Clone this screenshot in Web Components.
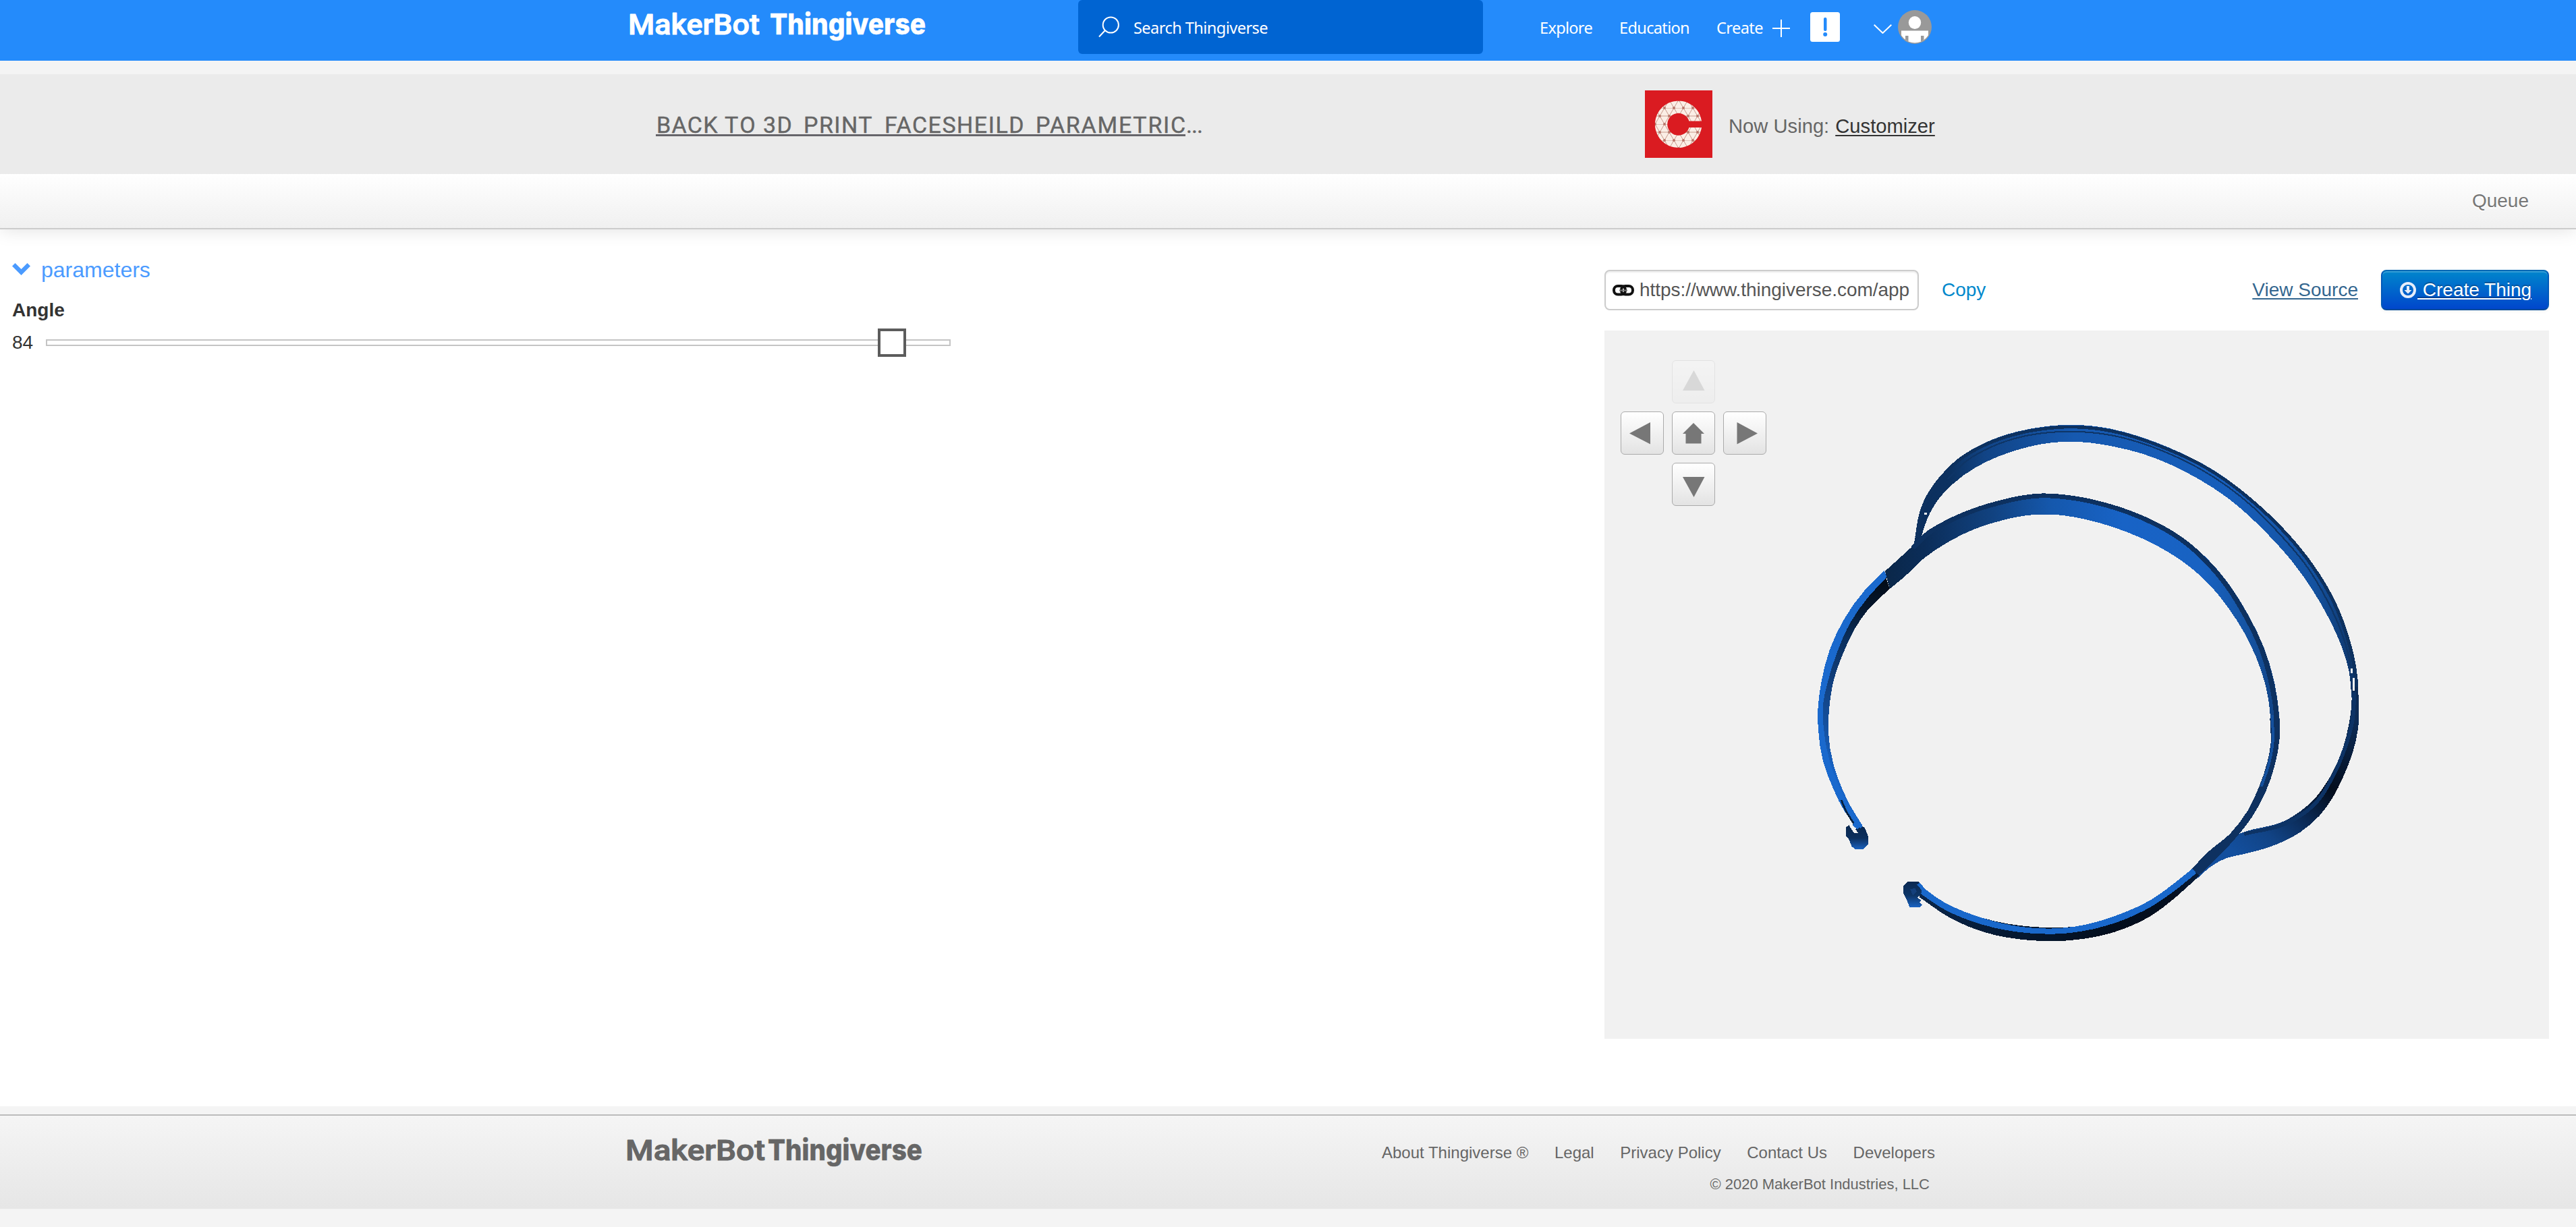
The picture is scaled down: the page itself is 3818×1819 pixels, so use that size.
<!DOCTYPE html>
<html lang="en">
<head>
<meta charset="utf-8">
<title>Customizer - Thingiverse</title>
<style>
  body { margin: 0; background: #f4f4f4; font-family: "Liberation Sans", Arial, sans-serif; color: #333; }
</style>
</head>
<body>
<customizer-page></customizer-page>
<script>
const define = (name, html, setup) => customElements.define(name, class extends HTMLElement {
  connectedCallback() {
    if (this.shadowRoot) return;
    const t = document.createElement('template');
    t.innerHTML = html;
    this.attachShadow({ mode: 'open' }).append(t.content.cloneNode(true));
    if (setup) setup(this, this.shadowRoot);
  }
});

/* Text whose tracking is adjusted so it occupies a given width */
define('fit-text', `<style>:host{display:block;white-space:pre}span{display:inline-block}</style><span></span>`, (el, root) => {
  const s = root.querySelector('span');
  s.textContent = el.getAttribute('text');
  const w = +el.getAttribute('w');
  const natural = s.getBoundingClientRect().width;
  s.style.letterSpacing = ((w - natural) / s.textContent.length) + 'px';
  el.style.width = w + 'px';
});

define('brand-logo', `<style>
  :host{display:block;width:442px;height:50px}
  svg{display:block;overflow:visible;fill:currentColor}
  .m{font:500 43px Roboto,sans-serif;stroke:currentColor;stroke-width:1.100;stroke-linejoin:round}
  .t{font:800 43px Inter,"Liberation Sans",sans-serif;stroke:currentColor;stroke-width:.5}
</style><svg width="442" height="50"><text class="m" x="0" y="36" lengthAdjust="spacingAndGlyphs">MakerBot</text><text class="t" y="36" lengthAdjust="spacingAndGlyphs">Thingiverse</text></svg>`, (el, root) => {
  const [m, t] = root.querySelectorAll('text');
  m.setAttribute('textLength', el.getAttribute('m'));
  t.setAttribute('x', el.getAttribute('t'));
  t.setAttribute('textLength', el.getAttribute('tw'));
});

define('site-header', `<style>
  :host{display:flex;height:90px;background:#248bfb;color:#fff;font:24px/80px "Noto Sans","Open Sans",sans-serif;align-items:flex-start}
  brand-logo{margin:15px 0 0 931px;flex:none}
  .search{margin-left:225px;width:600px;height:80px;border-radius:6px;background:#0064d2;display:flex;flex:none}
  .search svg{margin-left:29px;flex:none}
  .search fit-text{margin-left:16px}
  fit-text{height:80px;line-height:82px;font-size:23.6px}
  nav{display:flex;align-items:flex-start}
  svg{display:block}
  .ex{margin-left:84px}.ed{margin-left:40px}.cr{margin-left:40px}
  .plus{margin:29px 0 0 14px}.note{margin:18px 0 0 30px}.chev{margin:36px 0 0 50px}.av{margin:15px 0 0 9px}
</style>
<brand-logo m="195" t="210" tw="231"></brand-logo>
<div class="search"><svg width="37" height="80" fill="none" stroke="#fff" stroke-width="2"><circle cx="19.3" cy="37" r="11.6"/><path d="M10.5 45.500L2 54.500"/></svg><fit-text text="Search Thingiverse" w="199"></fit-text></div>
<nav>
<fit-text class="ex" text="Explore" w="78"></fit-text>
<fit-text class="ed" text="Education" w="104"></fit-text>
<fit-text class="cr" text="Create" w="69"></fit-text>
<svg class="plus" width="26" height="26" stroke="#fff" stroke-width="2"><path d="M0 13H26M13 0V26"/></svg>
<svg class="note" width="44" height="44"><rect width="44" height="44" rx="3.500" fill="#fff"/><rect x="20" y="8" width="4.500" height="20" rx="2" fill="#248bfb"/><circle cx="22.200" cy="33" r="3" fill="#248bfb"/></svg>
<svg class="chev" width="27" height="14" fill="none" stroke="#fff" stroke-width="2"><path d="M.7 .7L13.500 13L26.300 .7"/></svg>
<svg class="av" width="50" height="50"><defs><clipPath id="c"><circle cx="25" cy="25" r="23.500"/></clipPath></defs><circle cx="25" cy="25" r="25" fill="#999"/><g clip-path="url(#c)"><ellipse cx="25" cy="18.500" rx="9.200" ry="9.500" fill="#fff"/><path d="M5 30.500H45V50H5Z" fill="#fff"/><path d="M11 38H15.500V50H11ZM34 38H38.500V50H34Z" fill="#999"/></g></svg>
</nav>`);

define('app-bar', `<style>
  :host{display:flex;height:148px;margin-top:20px;background:#ebebeb;color:#666;font-size:28px;align-items:flex-start}
  .back{display:flex;margin:52px 0 0 972px;width:810px;font:400 34px/46px Roboto,sans-serif;-webkit-text-stroke:.4px #666}
  .back a{display:flex;height:37px;border-bottom:3px solid #66656a;width:785px;color:#666}
  .back fit-text{flex:none;margin-left:1px}
  .logo{margin:24px 0 0 656px;flex:none}
  .using{margin:47px 0 0 24px;line-height:60px;font-size:29.2px;display:flex;gap:9px;white-space:nowrap}
  .using a{color:#333;text-decoration:underline;text-decoration-thickness:2px;text-underline-offset:3px}
  svg{display:block}
</style>
<div class="back"><a><fit-text text="BACK" w="92" style="margin-right:8px"></fit-text><fit-text text="TO" w="48" style="margin-right:8px"></fit-text><fit-text text="3D" w="44" style="margin-right:15px"></fit-text><fit-text text="PRINT" w="103" style="margin-right:16px"></fit-text><fit-text text="FACESHEILD" w="208" style="margin-right:15px"></fit-text><fit-text text="PARAMETRIC" w="224"></fit-text></a><fit-text text="..." w="24"></fit-text></div>
<svg class="logo" width="100" height="100" viewBox="0 0 100 100"><defs><pattern id="p" width="14" height="24" patternUnits="userSpaceOnUse" x="43" y="2"><rect width="14" height="24" fill="#fbeee6"/><path d="M0 0L14 24M14 0L0 24M0 0H14M0 12H14" stroke="#c89a8c" stroke-width="1"/><circle cx="7" cy="12" r="2" fill="#b9776b"/><circle cx="0" cy="0" r="2" fill="#b9776b"/><circle cx="14" cy="0" r="2" fill="#b9776b"/><circle cx="0" cy="24" r="2" fill="#b9776b"/><circle cx="14" cy="24" r="2" fill="#b9776b"/></pattern></defs><rect width="100" height="100" fill="#da1b21"/><path d="M84 45.500A34.700 34.700 0 1 0 84 55H65.500A16.500 16.500 0 1 1 65.500 45.500Z" fill="url(#p)"/></svg>
<div class="using"><span>Now Using:</span><a>Customizer</a></div>`);

define('queue-bar', `<style>
  :host{display:flex;justify-content:flex-end;box-sizing:border-box;height:82px;padding-right:70px;border-bottom:2px solid #ccc;background:linear-gradient(#fff,#f0f0f0);box-shadow:0 0 28px rgba(0,0,0,.13);clip-path:inset(0 0 -40px 0);color:#777;font-size:28px;line-height:79px;text-shadow:0 2px 0 #fff;position:relative}
</style><span>Queue</span>`);

define('param-panel', `<style>
  :host{display:block;padding:42px 0 0 18px;font-size:28px;width:1440px;box-sizing:border-box}
  .h{display:flex;color:#4b9bff;font-size:32px;line-height:36px;height:36px;gap:16px}
  .h svg{margin-top:8px}
  b{display:block;line-height:40px;margin-top:22px}
  .row{display:flex;height:42px;line-height:44px;margin-top:7px;align-items:center}
  .track{margin-left:19px;width:1341px;flex:none;height:10px;box-sizing:border-box;border:2px solid #c4c4c4;display:flex;align-items:center}
  .knob{margin-left:1231px;flex:none;box-sizing:border-box;width:42px;height:42px;border:4px solid #5c5c5c;background:#fff}
</style>
<div class="h"><svg width="27" height="18"><path d="M4.500 0L13.500 9L22.500 0L27 4.500L13.500 18L0 4.500Z" fill="#4b9bff"/></svg><span>parameters</span></div>
<b>Angle</b>
<div class="row"><span>84</span><div class="track"><div class="knob"></div></div></div>`);

define('tool-row', `<style>
  :host{display:flex;height:60px;line-height:60px;font-size:28px;width:1400px}
  .url{box-sizing:border-box;width:466px;border:2px solid #ccc;border-radius:8px;display:flex;line-height:56px;color:#555;padding-left:10px;box-shadow:inset 0 2px 2px rgba(0,0,0,.075)}
  .url svg{margin:20px 8px 0 0;flex:none}
  .copy{color:#08c;margin-left:34px}
  .src{margin-left:auto;color:#33668f;text-decoration:underline;text-decoration-thickness:2px;text-underline-offset:3px}
  .btn{box-sizing:border-box;margin-left:34px;width:249px;border-radius:8px;color:#fff;display:flex;padding-left:26px;background:linear-gradient(#08c,#04c);border:2px solid;border-color:#0069b5 #0058b8 #004a9a;background-origin:border-box;line-height:56px;text-shadow:0 -2px 0 rgba(0,0,0,.25);box-shadow:inset 0 2px 0 rgba(255,255,255,.2),0 2px 4px rgba(0,0,0,.05)}
  .btn svg{margin:15px 2px 0 0;flex:none}
  .btn span{white-space:pre;text-decoration:underline;text-decoration-thickness:2px;text-underline-offset:3px}
</style>
<div class="url"><svg width="32" height="17" fill="none" stroke="#111" stroke-width="4"><rect x="2" y="2" width="17" height="12.500" rx="6"/><rect x="13" y="2" width="17" height="12.500" rx="6"/><path d="M10 8.500H22" stroke="#777" stroke-width="2"/></svg><fit-text text="https://www.thingiverse.com/app" w="400"></fit-text></div>
<span class="copy">Copy</span><a class="src">View Source</a>
<a class="btn"><svg width="24" height="26"><circle cx="12" cy="13" r="10" fill="none" stroke="#e6edfa" stroke-width="4"/><path d="M10 7H14V13H17.500L12 18.500L6.500 13H10Z" fill="#e6edfa"/></svg><span> Create Thing</span></a>`);

define('pad-button', `<style>
  :host{display:block;box-sizing:border-box;width:64px;height:64px;border:1.500px solid #aaa;border-radius:6px;background:linear-gradient(#fff,#e3e3e3)}
  :host([off]){opacity:.2}
  svg{display:block;margin:-1px}
  path{fill:#777}
</style><svg width="64" height="64"><path/></svg>`, (el, root) => {
  root.querySelector('path').setAttribute('d', {
    up: 'M32.500 15L48.500 45H16Z', left: 'M13 32.500L44 16V48.500Z', home: 'M32 17L48 33H43.500V47.500H20.500V33H16Z',
    right: 'M51 32.500L20.500 16V48.500Z', down: 'M16 21H48.500L32.500 51Z'
  }[el.getAttribute('icon')]);
});

/* The headband model: bands are closed outlines smoothed through their points.
   Tangents are weighted by segment length so uneven spacing leaves no bumps. */
const curve = (pts, first) => {
  const len = (p, q) => Math.hypot(q[0] - p[0], q[1] - p[1]) || 1;
  const tan = i => {
    const a = pts[i - 1], b = pts[i], c = pts[i + 1];
    if (!a) return [0, 1].map(k => (c[k] - b[k]) / len(b, c));
    if (!c) return [0, 1].map(k => (b[k] - a[k]) / len(a, b));
    const p = len(a, b), q = len(b, c);
    return [0, 1].map(k => ((b[k] - a[k]) / p * q + (c[k] - b[k]) / q * p) / (p + q));
  };
  let d = (first ? 'M' : 'L') + pts[0];
  for (let i = 0; i < pts.length - 1; i++) {
    const b = pts[i], c = pts[i + 1], h = len(b, c) / 3, t = tan(i), u = tan(i + 1);
    d += `C${b[0] + t[0] * h} ${b[1] + t[1] * h} ${c[0] - u[0] * h} ${c[1] - u[1] * h} ${c}`;
  }
  return d;
};
const P = s => s.trim().split(' ').map(p => p.split(',').map(Number));
const band = (a, b, fill) => `<path d="${curve(P(a), true)}${curve(P(b).reverse(), false)}Z" fill="${fill}"/>`;
const line = (a, c, w) => `<path d="${curve(P(a), true)}" fill="none" stroke="${c}" stroke-width="${w}"/>`;
const grad = (id, x1, y1, x2, y2, stops) => `<linearGradient id="${id}" gradientUnits="userSpaceOnUse" x1="${x1}" y1="${y1}" x2="${x2}" y2="${y2}">${stops.map(s => `<stop offset="${s[0]}" stop-color="${s[1]}"/>`).join('')}</linearGradient>`;

const outTop = '342,398 352,345 367,285 385,240 410,203 460,150 520,111 610,76 680,62 745,57 850,68 925,90 1000,121 1080,162 1150,210 1215,266 1300,355 1370,448 1430,556 1465,655 1483,740 1490,790 1490,830';
const outTopIn = '362,375 370,345 385,305 408,265 445,223 500,179 560,147 640,119 695,108 745,105 800,108 860,119 930,138 1000,167 1080,212 1150,262 1205,312 1265,377 1320,445 1370,522 1415,607 1447,685 1466,755 1473,830';
const inTop = '268,472 340,400 380,358 430,326 500,293 560,273 615,259 672,252 735,256 800,268 870,289 960,329 1035,376 1100,436 1155,507 1205,594 1247,690 1272,780 1285,870 1287,900';
const inTopIn = '280,522 318,488 370,434 430,390 500,352 570,328 625,315 675,311 730,314 790,326 860,348 930,378 1000,418 1058,462 1110,515 1156,578 1196,647 1226,715 1248,785 1260,850 1264,900';

const model = `<defs>
${grad('gi', 270, 0, 1290, 0, [[0, '#0a2749'], [.1, '#0b2d59'], [.27, '#114280'], [.42, '#1558ad'], [.6, '#1863c6'], [.8, '#1862c2'], [.92, '#1553a1'], [1, '#114282']])}
${grad('go', 345, 0, 1490, 0, [[0, '#0b2e5c'], [.08, '#0c3261'], [.16, '#114486'], [.36, '#1659b0'], [.7, '#175ebb'], [.9, '#1452a0'], [1, '#0d3365']])}
${grad('gd', 1150, 1250, 1490, 900, [[0, '#134f9e'], [.2, '#114385'], [.42, '#0a2750'], [.62, '#040e1d'], [1, '#0c2b55']])}
${grad('gl', 0, 500, 0, 1050, [[0, '#030c18'], [.13, '#05162c'], [.3, '#0b2f5d'], [.55, '#124282'], [.85, '#1659b0'], [1, '#1864c7']])}
${grad('gb', 350, 0, 1130, 0, [[0, '#0a264a'], [.25, '#061b36'], [.65, '#030e1d'], [.85, '#040f20'], [1, '#0b2a53']])}
${grad('gh', 0, 1195, 0, 1262, [[0, '#0a2850'], [.5, '#0c2f5d'], [1, '#1a64c4']])}
${grad('gk', 0, 1350, 0, 1425, [[0, '#0a2850'], [.55, '#0d3567'], [1, '#1a64c4']])}
</defs>`
+ band(outTop, outTopIn, 'url(#go)')
+ line('350,375 362,305 378,262 410,212 460,156 520,117 610,82 680,68 745,63 850,74 925,96 1000,127 1080,168 1150,216 1215,272 1300,361 1370,455 1428,562 1462,660 1481,750 1486,810', '#0d315f', 9)
+ line('430,210 480,158 540,121 620,91 680,80 745,76 850,86 925,107 1000,138 1080,181 1150,230 1215,287 1290,370 1355,455 1410,555 1450,655 1471,745 1474,800', '#0e3567', 4)
+ band('1490,800 1491,850 1490,915 1476,985 1450,1058 1425,1112 1390,1165 1340,1212 1275,1248 1190,1275 1150,1285 1115,1305 1072,1345', '1474,800 1472,860 1466,905 1450,975 1420,1050 1370,1125 1300,1180 1190,1213 1165,1225 1110,1275 1065,1325', 'url(#gd)')
+ line('1480,815 1475,895 1455,975 1425,1052 1375,1135 1308,1185 1195,1217', '#0d3365', 10)
+ band(inTop, inTopIn, 'url(#gi)')
+ line('340,406 380,364 430,332 500,299 560,279 615,265 672,258 735,262 800,274 870,295 960,335 1033,382 1096,442 1150,512 1199,598 1241,694 1265,785 1278,872 1279,900', '#0d3160', 13)
+ band('1287,890 1287,945 1275,1020 1250,1100 1215,1170 1180,1220 1130,1280 1075,1338', '1262,890 1264,960 1256,1010 1235,1080 1205,1150 1160,1215 1100,1270 1057,1320', '#0e3160')
+ line('1268,880 1269,960 1260,1015 1240,1082', '#14509d', 7)
+ band('268,480 215,535 165,610 125,700 103,790 98,850 98,925 112,1010 137,1090 165,1150 195,1195', '280,522 225,580 190,635 158,710 137,775 124,860 122,930 135,1020 158,1090 180,1140 210,1193', 'url(#gl)')
+ band('266,471 215,527 165,603 125,695 103,790 95,860 96,925 108,1010 135,1090 165,1155 195,1197', '273,488 225,545 180,615 145,700 118,795 108,850 109,910 125,1010 150,1085 180,1145 210,1197', '#1a69cd')
+ line('155,1120 168,1153 188,1188', '#08213f', 5)
+ band('352,1360 420,1412 520,1455 650,1480 760,1479 870,1448 960,1400 1020,1352 1062,1315', '358,1397 440,1457 530,1497 640,1518 750,1518 860,1495 950,1452 1020,1395 1080,1335', 'url(#gb)')
+ band('350,1355 420,1410 520,1455 620,1480 690,1485 760,1479 870,1446 960,1400 1020,1352 1062,1315', '352,1380 420,1430 520,1474 640,1498 740,1498 870,1466 960,1420 1025,1370 1072,1328', '#1968cb')
+ `<path d="M175 1192L167 1198V1222L174 1230L182 1252L192 1261H210L225 1246V1225L216 1200L205 1190L195 1192L192 1204L200 1215L188 1214Z" fill="url(#gh)"/><path d="M186 1188L200 1200M196 1190L208 1197" stroke="#1a69cd" stroke-width="9"/>
<path d="M328 1351H354L362 1363L362 1384L352 1398L362 1405L357 1411L364 1418L358 1425H332L322 1398L316 1386V1364Z" fill="url(#gk)"/><path d="M354 1358L368 1375" stroke="#1968cb" stroke-width="9"/><path d="M333 1374L345 1370L350 1380L340 1390Z" fill="#14407c"/>
<path d="M370 305h6v6h-6ZM1471 747h5v15h-5ZM1476 775h5v35h-5Z" fill="#f1f1f1"/>`;

define('model-view', `<style>
  :host{display:grid;width:1400px;height:1050px;background:#f1f1f1;margin-top:30px}
  .pad,.model{grid-area:1/1}
  .pad{display:grid;grid-template-columns:repeat(3,64px);grid-template-rows:repeat(3,64px);gap:12px;margin:44px 0 0 24px}
  .model{margin:110px 0 0 262px;display:block}
  [icon=up]{grid-area:1/2}[icon=left]{grid-area:2/1}[icon=home]{grid-area:2/2}[icon=right]{grid-area:2/3}[icon=down]{grid-area:3/2}
</style>
<svg class="model" width="900" height="820" viewBox="0 0 1568 1568" preserveAspectRatio="none" shape-rendering="crispEdges">${model}</svg>
<div class="pad"><pad-button icon="up" off></pad-button><pad-button icon="left"></pad-button><pad-button icon="home"></pad-button><pad-button icon="right"></pad-button><pad-button icon="down"></pad-button></div>`);

define('site-footer', `<style>
  :host{display:flex;box-sizing:border-box;height:140px;margin-top:12px;border-top:2px solid #bbb;background:linear-gradient(#f5f5f5,#e6e6e6);color:#666;align-items:flex-start}
  brand-logo{margin:30px 0 0 927px;flex:none}
  .r{width:820px;margin:39px 0 0 679px}
  .l{display:flex;font-size:24px;line-height:32px;justify-content:space-between}
  .c{font-size:22px;line-height:30px;margin:16px 8px 0 0;text-align:right}
</style>
<brand-logo m="207" t="211" tw="229"></brand-logo>
<div class="r"><div class="l"><span>About Thingiverse ®</span><span>Legal</span><span>Privacy Policy</span><span>Contact Us</span><span>Developers</span></div><div class="c">© 2020 MakerBot Industries, LLC</div></div>`);

define('customizer-page', `<style>
  :host{display:block;width:3818px;height:1819px;overflow:hidden}
  main{display:flex;justify-content:space-between;height:1300px;background:#fff}
  .right{margin:60px 40px 0 0}
</style>
<site-header></site-header><app-bar></app-bar><queue-bar></queue-bar>
<main><param-panel></param-panel><div class="right"><tool-row></tool-row><model-view></model-view></div></main>
<site-footer></site-footer>`);
</script>
</body>
</html>
